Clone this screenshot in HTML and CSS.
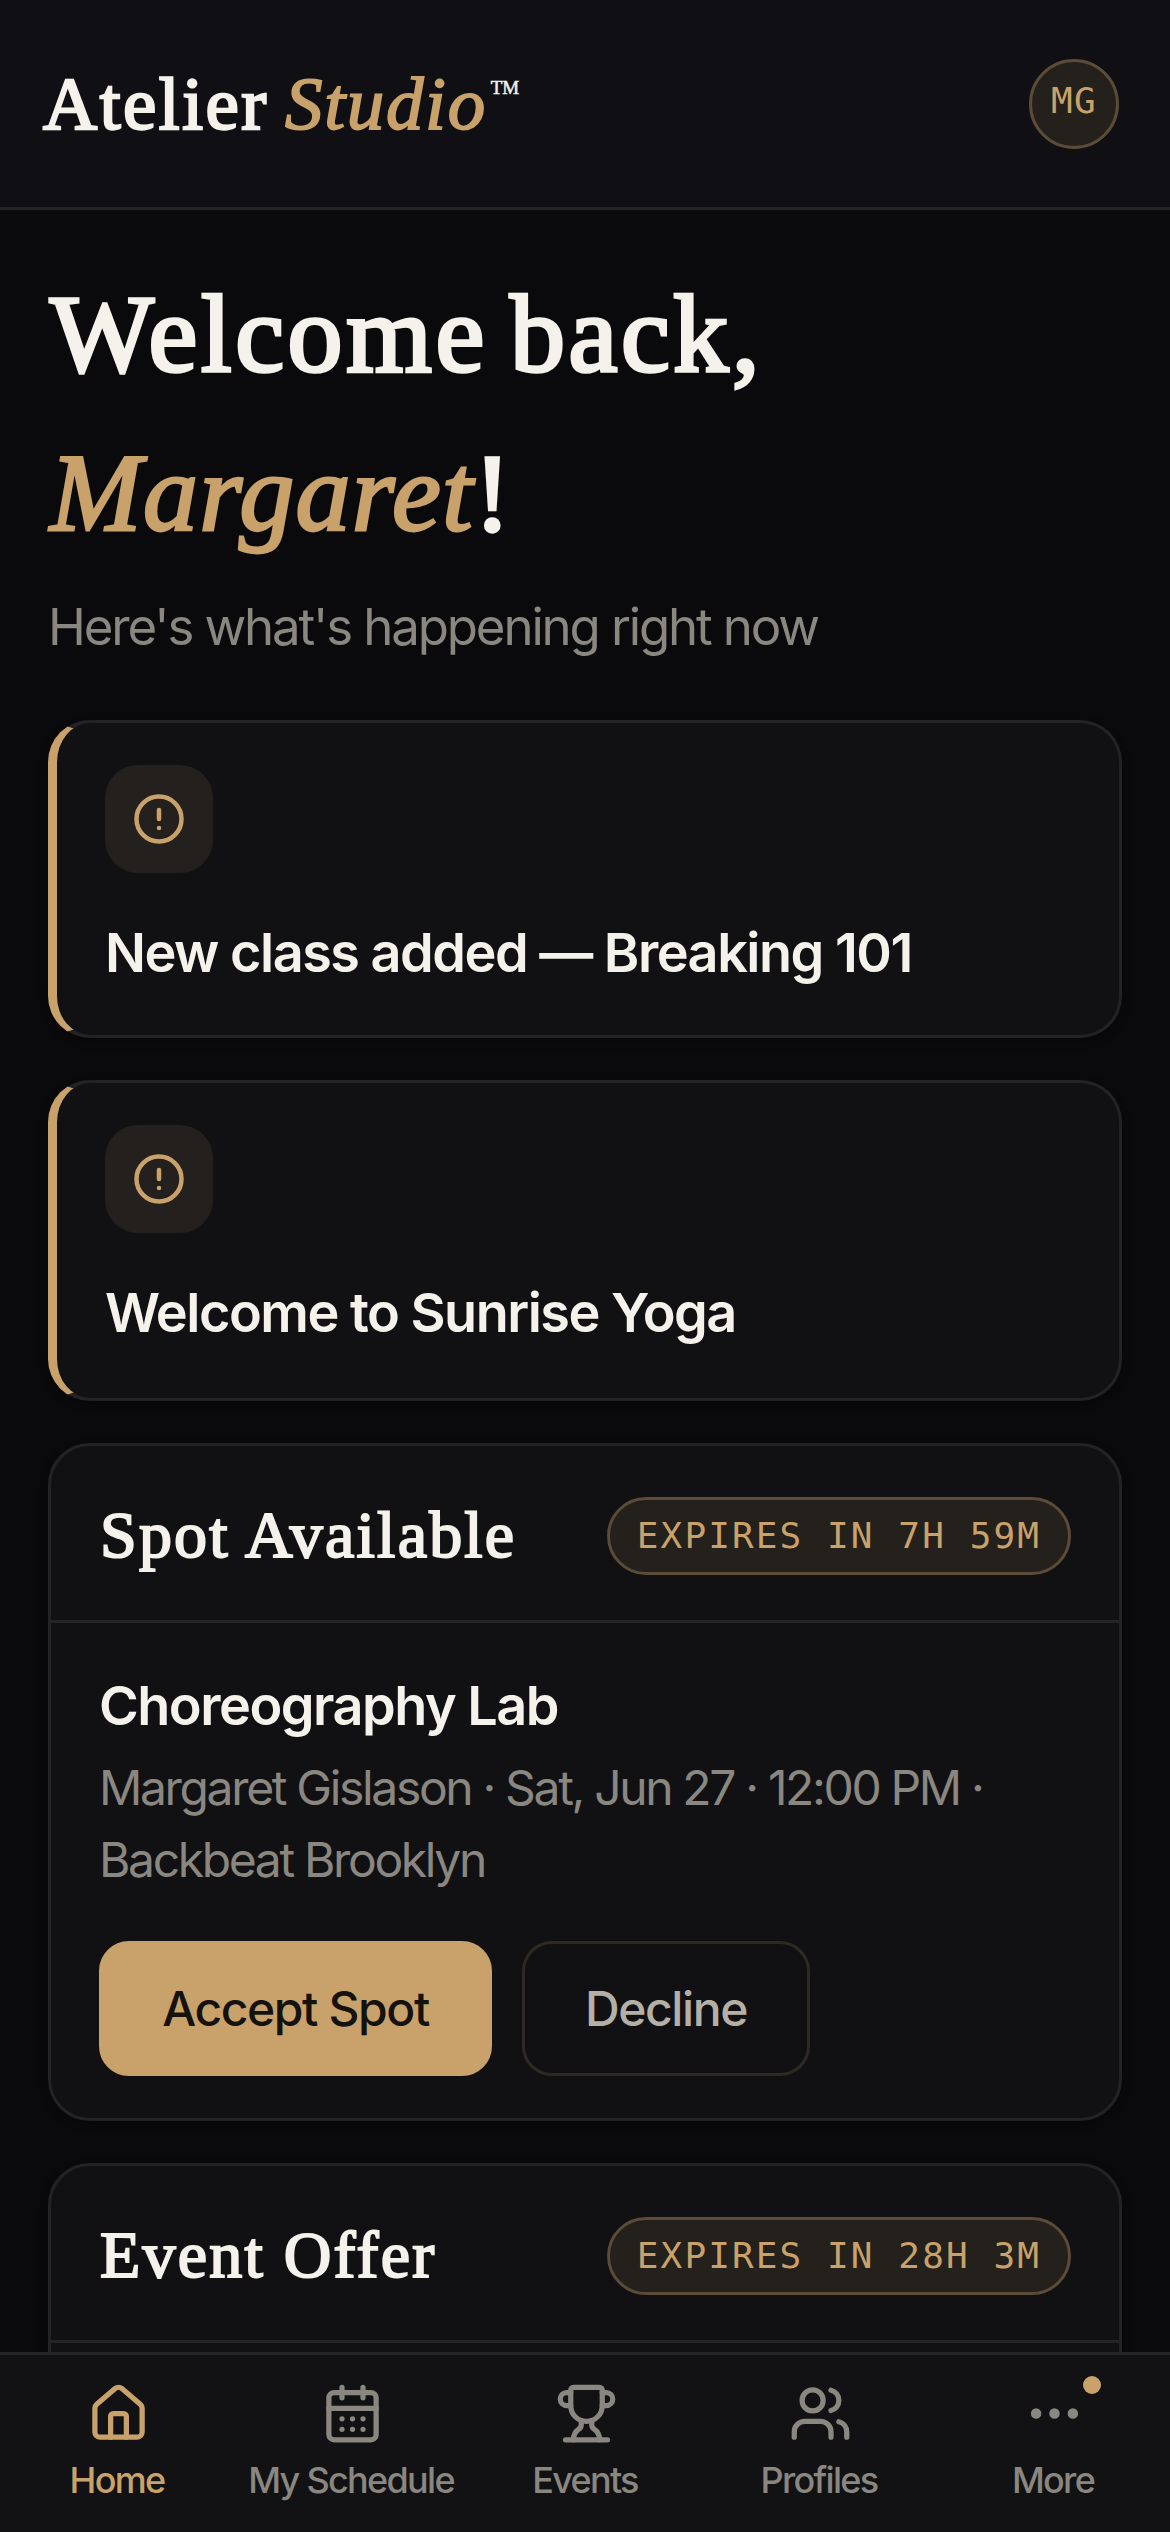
FILE: index.html
```html
<!DOCTYPE html>
<html lang="en">
<head>
<meta charset="utf-8">
<title>Atelier Studio</title>
<link rel="stylesheet" href="styles.css">
</head>
<body>
<div class="app">
  <header class="topbar">
    <div class="brand"><span class="brand-main">Atelier</span> <em class="brand-accent">Studio</em><sup class="brand-tm">TM</sup></div>
    <div class="avatar">MG</div>
  </header>

  <main class="content">
    <h1 class="greeting">Welcome back,<br><em class="greeting-name">Margaret</em>!</h1>
    <p class="subtitle">Here's what's happening right now</p>

    <section class="notice">
      <div class="notice-icon">
        <svg class="icon" viewBox="0 0 24 24"><circle cx="12" cy="12" r="10"/><path d="M12 8v4M12 16h.01"/></svg>
      </div>
      <h2 class="item-title">New class added — Breaking 101</h2>
    </section>

    <section class="notice notice-tall">
      <div class="notice-icon">
        <svg class="icon" viewBox="0 0 24 24"><circle cx="12" cy="12" r="10"/><path d="M12 8v4M12 16h.01"/></svg>
      </div>
      <h2 class="item-title">Welcome to Sunrise Yoga</h2>
    </section>

    <section class="card">
      <div class="card-head">
        <h2 class="card-title">Spot Available</h2>
        <span class="pill">EXPIRES IN 7H 59M</span>
      </div>
      <div class="card-body">
        <h3 class="item-title">Choreography Lab</h3>
        <p class="meta">Margaret Gislason · Sat, Jun 27 · 12:00 PM · Backbeat Brooklyn</p>
        <div class="actions">
          <button class="btn btn-primary">Accept Spot</button>
          <button class="btn btn-outline">Decline</button>
        </div>
      </div>
    </section>

    <section class="card">
      <div class="card-head">
        <h2 class="card-title">Event Offer</h2>
        <span class="pill">EXPIRES IN 28H 3M</span>
      </div>
      <div class="card-body"></div>
    </section>
  </main>

  <nav class="tabs">
    <a class="tab tab-active">
      <svg class="icon" viewBox="0 0 24 24"><path d="M15 21v-8a1 1 0 0 0-1-1h-4a1 1 0 0 0-1 1v8"/><path d="M3 10a2 2 0 0 1 .709-1.528l7-5.999a2 2 0 0 1 2.582 0l7 5.999A2 2 0 0 1 21 10v9a2 2 0 0 1-2 2H5a2 2 0 0 1-2-2z"/></svg>
      <span class="tab-label">Home</span>
    </a>
    <a class="tab">
      <svg class="icon" viewBox="0 0 24 24"><path d="M8 2v4M16 2v4M3 10h18"/><rect x="3" y="4" width="18" height="18" rx="2"/><path d="M8 14h.01M12 14h.01M16 14h.01M8 18h.01M12 18h.01M16 18h.01"/></svg>
      <span class="tab-label">My Schedule</span>
    </a>
    <a class="tab">
      <svg class="icon" viewBox="0 0 24 24"><path d="M10 14.66v1.626a2 2 0 0 1-.976 1.696A5 5 0 0 0 7 21.978"/><path d="M14 14.66v1.626a2 2 0 0 0 .976 1.696A5 5 0 0 1 17 21.978"/><path d="M18 9h1.5a1 1 0 0 0 0-5H18"/><path d="M4 22h16"/><path d="M6 9a6 6 0 0 0 12 0V3a1 1 0 0 0-1-1H7a1 1 0 0 0-1 1z"/><path d="M6 9H4.5a1 1 0 0 1 0-5H6"/></svg>
      <span class="tab-label">Events</span>
    </a>
    <a class="tab">
      <svg class="icon" viewBox="0 0 24 24"><path d="M16 21v-2a4 4 0 0 0-4-4H6a4 4 0 0 0-4 4v2"/><path d="M16 3.128a4 4 0 0 1 0 7.744"/><path d="M22 21v-2a4 4 0 0 0-3-3.87"/><circle cx="9" cy="7" r="4"/></svg>
      <span class="tab-label">Profiles</span>
    </a>
    <a class="tab">
      <svg class="icon" viewBox="0 0 24 24"><circle cx="5" cy="12" r="1"/><circle cx="12" cy="12" r="1"/><circle cx="19" cy="12" r="1"/></svg>
      <span class="tab-label">More</span>
      <span class="badge"></span>
    </a>
  </nav>
</div>
</body>
</html>
```
FILE: styles.css
```css
:root {
  --bg: #0a0a0c;
  --surface: #111113;
  --line: #232325;
  --cream: #f5f2eb;
  --muted: #8a8680;
  --gold: #c9a26b;
  --serif: "Liberation Serif", serif;
  --sans: Inter, sans-serif;
  --mono: "DejaVu Sans Mono", monospace;
}

* { box-sizing: border-box; margin: 0; padding: 0; }

body { background: var(--bg); color: var(--cream); font-family: var(--sans); }

.app {
  display: flex;
  flex-direction: column;
  width: 1170px;
  height: 2532px;
  overflow: hidden;
}

.topbar {
  display: flex;
  flex: none;
  align-items: center;
  justify-content: space-between;
  height: 210px;
  padding: 0 51px 0 43px;
  background: #101014;
  border-bottom: 3px solid #222224;
}

.brand {
  font: 400 75px/90px var(--serif);
  letter-spacing: 2.5px;
  white-space: nowrap;
  -webkit-text-stroke: 2.4px currentColor;
}
.brand-accent { color: var(--gold); letter-spacing: 1.7px; margin-left: -5px; -webkit-text-stroke-width: 1.8px; }
.brand-tm { font-size: 19px; line-height: 0; letter-spacing: -0.3px; margin-left: 4px; vertical-align: 35px; -webkit-text-stroke-width: 0.5px; }

.avatar {
  display: flex;
  justify-content: center;
  width: 90px;
  height: 90px;
  background: #24201c;
  border: 3px solid #5c4b36;
  border-radius: 50%;
  color: var(--gold);
  font: 400 36px/78px var(--mono);
  letter-spacing: 1.4px;
}

.content {
  display: flex;
  flex: 1;
  flex-direction: column;
  gap: 42px;
  min-height: 0;
  padding: 45px 48px 0;
  overflow: hidden;
}

.greeting {
  flex: none;
  height: 321px;
  padding-left: 2px;
  font: 400 110px/159px var(--serif);
  letter-spacing: 3.6px;
  word-spacing: -9px;
  -webkit-text-stroke: 3.6px currentColor;
}
.greeting-name { color: var(--gold); letter-spacing: 1.3px; -webkit-text-stroke-width: 2.8px; }

.subtitle {
  flex: none;
  height: 60px;
  margin: -21px 0 21px;
  color: var(--muted);
  font-size: 51px;
  line-height: 60px;
  letter-spacing: -2.15px;
}

.notice, .card {
  flex: none;
  background: var(--surface);
  border: 3px solid var(--line);
  border-radius: 42px;
  box-shadow: 0 3px 9px rgba(0, 0, 0, 0.35);
}

.notice {
  display: flex;
  flex-direction: column;
  gap: 39px;
  height: 318px;
  padding: 42px 48px;
  border-left: 9px solid var(--gold);
}
.notice-tall { height: 321px; }

.notice-icon {
  display: grid;
  place-items: center;
  width: 108px;
  height: 108px;
  background: #24201d;
  border-radius: 33px;
  color: var(--gold);
}
.notice-icon .icon { width: 54px; height: 54px; }

.icon {
  display: block;
  fill: none;
  stroke: currentColor;
  stroke-width: 2;
  stroke-linecap: round;
  stroke-linejoin: round;
}

.item-title {
  font-size: 54px;
  font-weight: 600;
  line-height: 81px;
  letter-spacing: -1.5px;
  white-space: nowrap;
}

.card-head {
  display: flex;
  align-items: center;
  justify-content: space-between;
  height: 177px;
  padding: 6px 48px 0;
  border-bottom: 3px solid var(--line);
}

.card-title {
  padding: 0 0 3px 1px;
  font: 400 66px/80px var(--serif);
  letter-spacing: 2.2px;
  white-space: nowrap;
  -webkit-text-stroke: 2px currentColor;
}

.pill {
  height: 78px;
  padding: 0 27px;
  background: #24201c;
  border: 3px solid #5c4b36;
  border-radius: 39px;
  color: var(--gold);
  font: 400 36px/72px var(--mono);
  letter-spacing: 2.1px;
  white-space: nowrap;
}

.card-body { height: 495px; padding: 42px 48px; }

.meta {
  margin-top: 6px;
  color: var(--muted);
  font-size: 48px;
  line-height: 72px;
  letter-spacing: -2.35px;
}

.actions { display: flex; gap: 30px; margin-top: 45px; }

.btn {
  height: 135px;
  background: none;
  border: 3px solid transparent;
  border-radius: 30px;
  font: 500 48px/129px var(--sans);
  letter-spacing: -1.4px;
}
.btn-primary { width: 393px; background: var(--gold); border-color: var(--gold); color: #15120e; }
.btn-outline { width: 288px; border-color: #2e2923; color: #b5b0a6; }

.tabs {
  display: grid;
  flex: none;
  grid-template-columns: repeat(5, 1fr);
  height: 180px;
  background: #121214;
  border-top: 3px solid #252527;
}

.tab {
  position: relative;
  display: flex;
  flex-direction: column;
  align-items: center;
  gap: 11px;
  padding-top: 27px;
  color: var(--muted);
}
.tab-active { color: var(--gold); }
.tab .icon { width: 63px; height: 63px; margin-left: 3px; }
.tab-label { font-size: 36px; font-weight: 500; line-height: 48px; letter-spacing: -1.7px; white-space: nowrap; }

.badge {
  position: absolute;
  top: 21px;
  right: 69px;
  width: 18px;
  height: 18px;
  background: var(--gold);
  border-radius: 50%;
}
```
